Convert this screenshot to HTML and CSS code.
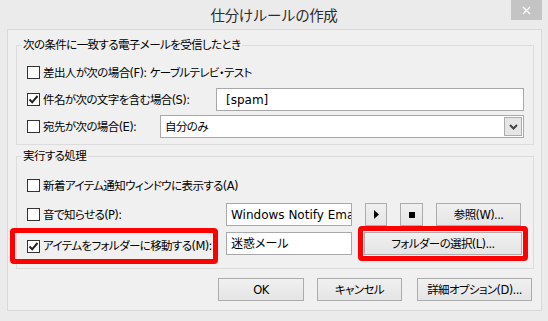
FILE: index.html
```html
<!DOCTYPE html>
<html lang="ja">
<head>
  <meta charset="UTF-8">
  <title>仕分けルールの作成</title>
  <link rel="stylesheet" href="styles.css">
</head>
<body>
  <div class="titlebar">
    <span class="title">仕分けルールの作成</span>
    <span class="close">
      <svg width="9" height="9" viewBox="0 0 9 9"><path d="M1 1 L8 8 M8 1 L1 8" stroke="#fff" stroke-width="1.3" fill="none"/></svg>
    </span>
  </div>

  <div class="panel">
    <fieldset class="group group-cond">
      <legend>次の条件に一致する電子メールを受信したとき</legend>
      <div class="row">
        <label class="check"><span class="box"></span>差出人が次の場合(F): ケーブルテレビ・テスト</label>
      </div>
      <div class="row row-split">
        <label class="check">
          <span class="box">
            <svg width="11" height="11" viewBox="0 0 11 11"><path d="M1.5 5.5 L4.2 8.3 L9.5 2" stroke="#222" stroke-width="2" fill="none"/></svg>
          </span>件名が次の文字を含む場合(S):
        </label>
        <div class="field field-subject">[spam]</div>
      </div>
      <div class="row row-split">
        <label class="check"><span class="box"></span>宛先が次の場合(E):</label>
        <div class="field field-to">
          自分のみ
          <span class="drop">
            <svg width="9" height="6" viewBox="0 0 9 6"><path d="M1 1 L4.5 4.5 L8 1" stroke="#444" stroke-width="2" fill="none"/></svg>
          </span>
        </div>
      </div>
    </fieldset>

    <fieldset class="group group-action">
      <legend>実行する処理</legend>
      <div class="row">
        <label class="check"><span class="box"></span>新着アイテム通知ウィンドウに表示する(A)</label>
      </div>
      <div class="row">
        <label class="check action-label"><span class="box"></span>音で知らせる(P):</label>
        <div class="field field-sound">Windows Notify Email</div>
        <button class="btn icon-btn">
          <svg width="5" height="9" viewBox="0 0 5 9"><path d="M0 0 L5 4.5 L0 9 Z" fill="#000"/></svg>
        </button>
        <button class="btn icon-btn stop-btn"><span class="stop"></span></button>
        <button class="btn browse-btn">参照(W)...</button>
      </div>
      <div class="row">
        <span class="mark mark-label">
          <label class="check">
            <span class="box">
              <svg width="11" height="11" viewBox="0 0 11 11"><path d="M1.5 5.5 L4.2 8.3 L9.5 2" stroke="#222" stroke-width="2" fill="none"/></svg>
            </span>アイテムをフォルダーに移動する(M):
          </label>
        </span>
        <div class="field field-sound">迷惑メール</div>
        <span class="mark mark-button">
          <button class="btn folder-btn">フォルダーの選択(L)...</button>
        </span>
      </div>
    </fieldset>

    <div class="actions">
      <button class="btn ok-btn">OK</button>
      <button class="btn cancel-btn">キャンセル</button>
      <button class="btn option-btn">詳細オプション(D)...</button>
    </div>
  </div>
</body>
</html>
```

FILE: styles.css
```css
* {
  box-sizing: border-box;
}
body {
  margin: 0;
  background: #ebebeb;
  color: #000;
  font: 11.5px/16px "DejaVu Sans", "Noto Sans CJK JP", sans-serif;
  font-feature-settings: "palt";
  letter-spacing: -0.6px;
}
.titlebar {
  display: grid;
  grid-template-columns: 1fr auto 1fr;
  height: 29px;
}
.title {
  grid-column: 2;
  font: 14.5px/30px "Noto Sans CJK JP", sans-serif;
  letter-spacing: -0.4px;
  color: #2b2b2b;
}
.close {
  grid-column: 3;
  justify-self: end;
  width: 31px;
  height: 20px;
  margin-right: 6px;
  background: #c4c4c4;
  display: flex;
  align-items: center;
  justify-content: center;
}
.panel {
  margin: 0 6px 0 7px;
  border: 1px solid #d9d9d9;
  background: #f0f0f0;
  padding: 7px 7px 9px 8px;
}
.group {
  margin: 0;
  border: 1px solid #dcdcdc;
  display: flex;
  flex-direction: column;
}
.group legend {
  margin-left: -6px;
  padding: 0 2px;
  line-height: 16px;
}
.group-cond {
  padding: 8px 9px 6px 10px;
  gap: 4px;
}
.group-action {
  margin-top: 3px;
  padding: 10px 9px 13px 10px;
  gap: 6px;
}
.row {
  display: flex;
  align-items: center;
  height: 23px;
}
.row-split {
  justify-content: space-between;
}
.check {
  display: flex;
  align-items: center;
  gap: 3px;
  white-space: nowrap;
}
.box {
  flex: none;
  width: 13px;
  height: 13px;
  border: 1px solid #333;
  background: #fff;
  display: flex;
  align-items: center;
  justify-content: center;
}
.field {
  height: 23px;
  border: 1px solid #a9a9a9;
  background: #fff;
  display: flex;
  align-items: center;
  padding-left: 4px;
  white-space: nowrap;
  overflow: hidden;
}
.field-subject {
  width: 308px;
  padding-left: 9px;
  font-size: 12px;
  letter-spacing: 0;
}
.field-to {
  width: 364px;
}
.drop {
  margin-left: auto;
  margin-right: 1px;
  width: 18px;
  height: 19px;
  border: 1px solid #acacac;
  background: #e6e6e6;
  display: flex;
  align-items: center;
  justify-content: center;
}
.action-label {
  width: 185px;
  margin-right: 14px;
}
.field-sound {
  width: 126px;
  flex: none;
  font-size: 12px;
  letter-spacing: 0;
}
.btn {
  height: 23px;
  padding: 0;
  border: 1px solid #acacac;
  background: linear-gradient(#f0f0f0, #e5e5e5);
  color: #000;
  font: inherit;
  letter-spacing: inherit;
  display: flex;
  align-items: center;
  justify-content: center;
}
.icon-btn {
  width: 22px;
  margin-left: 13px;
}
.stop-btn {
  width: 23px;
}
.stop {
  width: 6px;
  height: 6px;
  background: #000;
}
.browse-btn {
  width: 85px;
  margin-left: 13px;
}
.mark {
  display: flex;
  align-items: center;
  border: 5px solid #ff0000;
  border-radius: 4px;
}
.mark-label {
  width: 208px;
  height: 36px;
  margin: -4px 8px -9px -17px;
  padding-left: 12px;
}
.mark-button {
  padding: 1px;
  margin: -6px -6px -6px 6px;
}
.folder-btn {
  width: 158px;
}
.actions {
  display: flex;
  justify-content: flex-end;
  margin-top: 9px;
  padding-right: 2px;
}
.ok-btn {
  width: 86px;
  margin-right: 13px;
}
.cancel-btn {
  width: 85px;
  margin-right: 15px;
}
.option-btn {
  width: 115px;
}
```
